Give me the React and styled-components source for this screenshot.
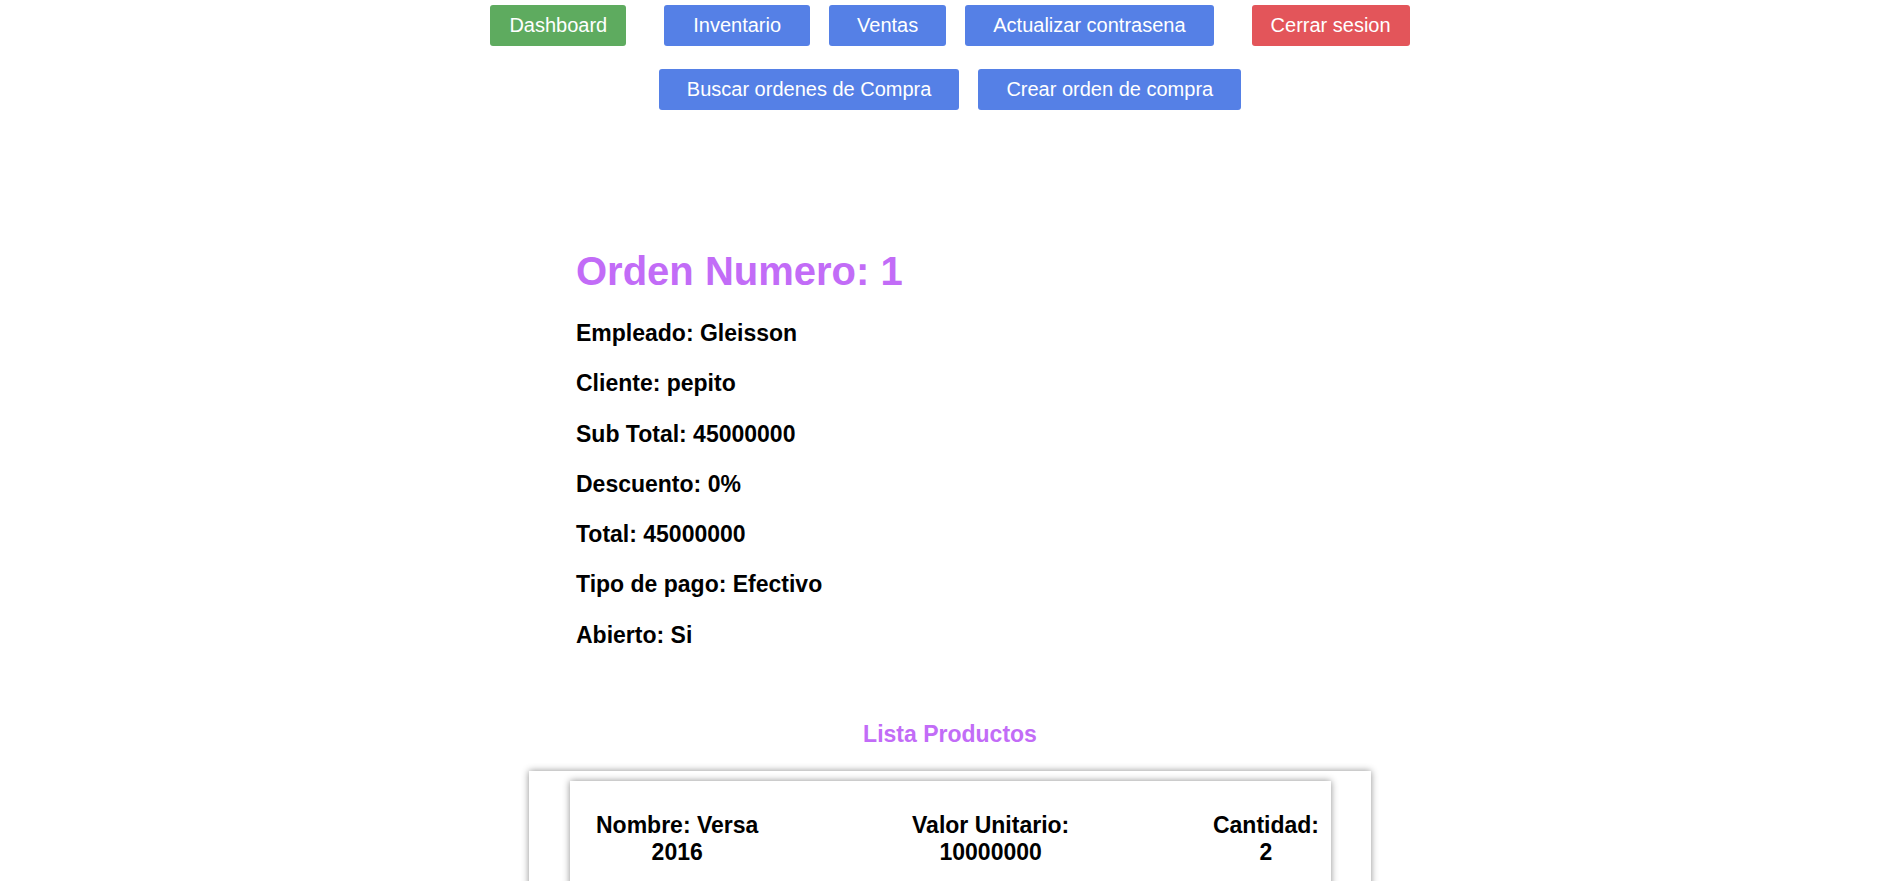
import React from 'react';
import styled, { createGlobalStyle } from 'styled-components';

const GlobalStyle = createGlobalStyle`
  body {
    margin: 0;
    background: #ffffff;
    font-family: "Liberation Sans", Arial, sans-serif;
  }
`;

const Page = styled.div`
  padding-top: 5px;
  padding-bottom: 40px;
`;

const NavRow = styled.nav`
  display: flex;
  justify-content: center;
  align-items: center;
  margin-bottom: ${(p) => p.$bottom || 0}px;
`;

const NavGroup = styled.div`
  display: flex;
  gap: ${(p) => p.$gap}px;
  margin: 0 ${(p) => p.$side || 0}px;
`;

const colors = {
  green: '#5eab5f',
  blue: '#5580e6',
  red: '#e3555a',
};

const NavButton = styled.button`
  background: ${(p) => colors[p.$color]};
  color: #ffffff;
  border: none;
  border-radius: 3px;
  font-family: "Liberation Sans", Arial, sans-serif;
  font-size: 20px;
  line-height: 23px;
  padding: 9px ${(p) => p.$pad}px;
  cursor: pointer;
  white-space: nowrap;
`;

const Main = styled.main`
  width: 842px;
  margin: 138px auto 0;
`;

const Details = styled.section`
  padding-left: 47px;
`;

const Title = styled.h1`
  margin: 0 0 26px;
  font-size: 40px;
  line-height: 46px;
  font-weight: bold;
  color: #c26cf7;
`;

const InfoLine = styled.h3`
  margin: 0 0 23.3px;
  font-size: 23px;
  line-height: 27px;
  font-weight: bold;
  color: #000000;
`;

const ListTitle = styled.h3`
  margin: 72px 0 23px;
  text-align: center;
  font-size: 23px;
  line-height: 27px;
  font-weight: bold;
  color: #c26cf7;
`;

const OuterCard = styled.div`
  padding: 10px 40px 30px 41px;
  box-shadow: 0 0 7px rgba(0, 0, 0, 0.45);
  background: #ffffff;
`;

const ProductCard = styled.div`
  display: flex;
  justify-content: space-between;
  align-items: flex-start;
  padding: 31px 12px 40px 26px;
  box-shadow: 0 0 7px rgba(0, 0, 0, 0.45);
  background: #ffffff;
`;

const Field = styled.div`
  display: flex;
  flex-direction: column;
  align-items: center;
  margin-left: ${(p) => p.$shift || 0}px;
  font-size: 23px;
  line-height: 27px;
  font-weight: bold;
  color: #000000;
`;

const info = [
  'Empleado: Gleisson',
  'Cliente: pepito',
  'Sub Total: 45000000',
  'Descuento: 0%',
  'Total: 45000000',
  'Tipo de pago: Efectivo',
  'Abierto: Si',
];

export default function App() {
  return (
    <Page>
      <GlobalStyle />
      <NavRow $bottom={23}>
        <NavButton $color="green" $pad={19}>Dashboard</NavButton>
        <NavGroup $gap={19} $side={38}>
          <NavButton $color="blue" $pad={29}>Inventario</NavButton>
          <NavButton $color="blue" $pad={28}>Ventas</NavButton>
          <NavButton $color="blue" $pad={28}>Actualizar contrasena</NavButton>
        </NavGroup>
        <NavButton $color="red" $pad={19}>Cerrar sesion</NavButton>
      </NavRow>
      <NavRow>
        <NavGroup $gap={19}>
          <NavButton $color="blue" $pad={28}>Buscar ordenes de Compra</NavButton>
          <NavButton $color="blue" $pad={28}>Crear orden de compra</NavButton>
        </NavGroup>
      </NavRow>

      <Main>
        <Details>
          <Title>Orden Numero: 1</Title>
          {info.map((line) => (
            <InfoLine key={line}>{line}</InfoLine>
          ))}
        </Details>

        <ListTitle>Lista Productos</ListTitle>

        <OuterCard>
          <ProductCard>
            <Field>
              <span>Nombre: Versa</span>
              <span>2016</span>
            </Field>
            <Field $shift={10}>
              <span>Valor Unitario:</span>
              <span>10000000</span>
            </Field>
            <Field>
              <span>Cantidad:</span>
              <span>2</span>
            </Field>
          </ProductCard>
        </OuterCard>
      </Main>
    </Page>
  );
}
